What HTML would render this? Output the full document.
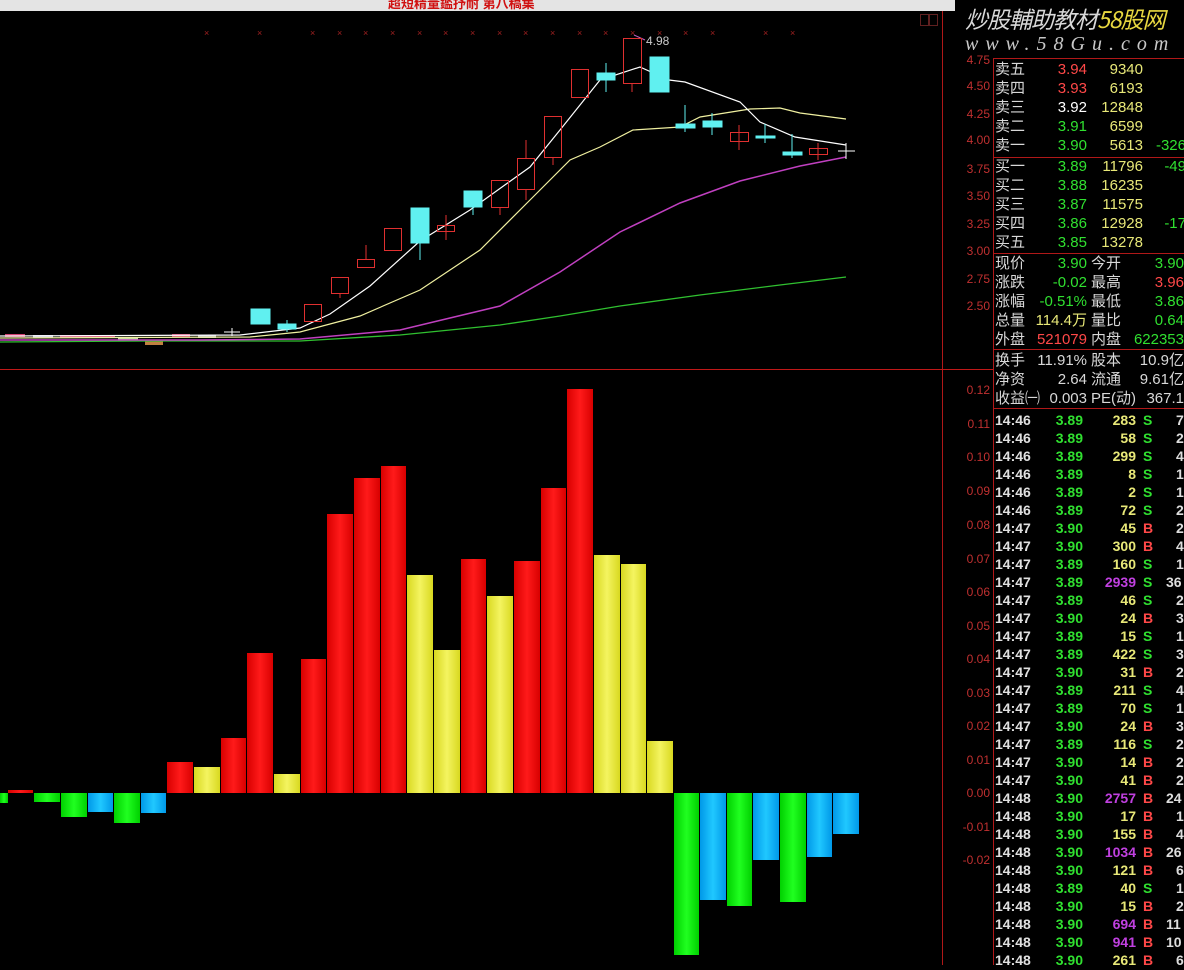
<!DOCTYPE html>
<html><head><meta charset="utf-8">
<style>
*{margin:0;padding:0}
body{width:1184px;height:965px;background:#000;overflow:hidden;position:relative;font-family:"Liberation Sans","Noto Sans CJK SC",sans-serif}
.t{position:absolute;font-size:15px;line-height:19px;white-space:nowrap}
.r{text-align:right}
.ax{position:absolute;font-size:12px;color:#c03030;width:42px;text-align:right;left:948px;line-height:12px}
</style></head><body>
<div style="position:absolute;left:0;top:0;width:955px;height:11px;background:#e4e4e4"></div>
<div style="position:absolute;left:388px;top:-7px;font-size:13px;color:#d01010;font-weight:bold">超短精量鑑抒耐 第八稿集</div>
<svg width="1184" height="965" style="position:absolute;left:0;top:0">
<defs>
<linearGradient id="gr" x1="0" x2="1"><stop offset="0" stop-color="#d80000"/><stop offset=".5" stop-color="#ff1a1a"/><stop offset="1" stop-color="#d80000"/></linearGradient>
<linearGradient id="gy" x1="0" x2="1"><stop offset="0" stop-color="#d8d820"/><stop offset=".5" stop-color="#f4f460"/><stop offset="1" stop-color="#d8d820"/></linearGradient>
<linearGradient id="gg" x1="0" x2="1"><stop offset="0" stop-color="#00d000"/><stop offset=".5" stop-color="#20ff20"/><stop offset="1" stop-color="#00d000"/></linearGradient>
<linearGradient id="gb" x1="0" x2="1"><stop offset="0" stop-color="#0098e8"/><stop offset=".5" stop-color="#20c8ff"/><stop offset="1" stop-color="#0098e8"/></linearGradient>
</defs>
<line x1="942.5" y1="11" x2="942.5" y2="965" stroke="#b01818"/>
<line x1="993.5" y1="58" x2="993.5" y2="965" stroke="#b01818"/>
<line x1="0" y1="369.5" x2="993" y2="369.5" stroke="#c01818"/>
<g stroke="#b01818"><line x1="993" y1="58.5" x2="1184" y2="58.5"/><line x1="993" y1="157.5" x2="1184" y2="157.5"/><line x1="993" y1="253.5" x2="1184" y2="253.5"/><line x1="993" y1="349.5" x2="1184" y2="349.5"/><line x1="993" y1="408.5" x2="1184" y2="408.5"/></g>
<g fill="#a02020" font-size="9" font-family="Liberation Sans">
<text x="204" y="36">×</text><text x="257" y="36">×</text><text x="310" y="36">×</text><text x="337" y="36">×</text><text x="363" y="36">×</text><text x="390" y="36">×</text><text x="417" y="36">×</text><text x="443" y="36">×</text><text x="470" y="36">×</text><text x="497" y="36">×</text><text x="523" y="36">×</text><text x="550" y="36">×</text><text x="577" y="36">×</text><text x="603" y="36">×</text><text x="630" y="36">×</text><text x="657" y="36">×</text><text x="683" y="36">×</text><text x="710" y="36">×</text><text x="763" y="36">×</text><text x="790" y="36">×</text>
</g>
<text x="646" y="45" fill="#ccc" font-size="12" font-family="Liberation Sans">4.98</text>
<line x1="634" y1="35" x2="645" y2="40" stroke="#c060c0"/>
<g>
<rect x="5" y="334" width="20" height="3" fill="#d04070"/><rect x="33" y="335" width="20" height="3" fill="#c0c0d8"/><rect x="60" y="335" width="55" height="3" fill="#d04070"/><rect x="118" y="338" width="20" height="3" fill="#c0e0a0"/><rect x="145" y="341" width="18" height="4" fill="#c08040"/><rect x="172" y="334" width="18" height="3" fill="#d04070"/><rect x="198" y="335" width="18" height="3" fill="#c0c0d8"/>
<line x1="224" y1="332" x2="240" y2="332" stroke="#fff"/><line x1="232" y1="328" x2="232" y2="336" stroke="#fff"/>
</g>
<polyline fill="none" stroke="#30c030" stroke-width="1.3" points="0,342 150,341 300,341 400,335 500,325 560,316 620,306 700,295 780,285 846,277"/>
<polyline fill="none" stroke="#c040c0" stroke-width="1.5" points="0,340 200,340 300,339 400,330 500,306 560,272 620,232 680,203 740,181 800,166 846,157"/>
<polyline fill="none" stroke="#f0f0a0" stroke-width="1.2" points="0,338 250,337 300,332 360,316 420,290 480,250 530,200 570,160 600,147 633,130 680,127 700,117 750,109 780,108 800,113 846,119"/>
<polyline fill="none" stroke="#fff" stroke-width="1.2" points="0,336 240,335 300,328 330,314 370,286 420,241 470,210 530,167 560,130 600,80 640,67 669,80 685,82 740,102 760,122 795,137 846,145"/>
<g stroke="#e03030" fill="none">
<rect x="304.5" y="304.5" width="17" height="17"/><rect x="331.5" y="277.5" width="17" height="16"/><line x1="340" y1="293" x2="340" y2="298"/>
<rect x="357.5" y="259.5" width="17" height="8"/><line x1="366" y1="245" x2="366" y2="259"/>
<rect x="384.5" y="228.5" width="17" height="22"/>
<rect x="437.5" y="225.5" width="17" height="6"/><line x1="446" y1="215" x2="446" y2="240"/>
<rect x="491.5" y="180.5" width="17" height="27"/><line x1="500" y1="207" x2="500" y2="215"/>
<rect x="517.5" y="158.5" width="17" height="31"/><line x1="526" y1="140" x2="526" y2="158"/><line x1="526" y1="189" x2="526" y2="200"/>
<rect x="544.5" y="116.5" width="17" height="41"/><line x1="553" y1="157" x2="553" y2="165"/>
<rect x="571.5" y="69.5" width="17" height="28"/>
<rect x="623.5" y="38.5" width="18" height="45"/><line x1="632" y1="83" x2="632" y2="92"/>
<rect x="730.5" y="132.5" width="18" height="9"/><line x1="739" y1="125" x2="739" y2="150"/>
<rect x="809.5" y="148.5" width="18" height="6"/><line x1="818" y1="143" x2="818" y2="160"/>
</g>
<g fill="#60f0f0" stroke="#60f0f0">
<rect x="251" y="309" width="19" height="15"/>
<rect x="278" y="324" width="18" height="5"/><line x1="287" y1="320" x2="287" y2="332"/>
<rect x="411" y="208" width="18" height="35"/><line x1="420" y1="243" x2="420" y2="260"/>
<rect x="464" y="191" width="18" height="16"/><line x1="473" y1="207" x2="473" y2="215"/>
<rect x="597" y="73" width="18" height="7"/><line x1="606" y1="63" x2="606" y2="92"/>
<rect x="650" y="57" width="19" height="35"/>
<rect x="676" y="124" width="19" height="4"/><line x1="685" y1="105" x2="685" y2="132"/>
<rect x="703" y="121" width="19" height="6"/><line x1="712" y1="113" x2="712" y2="135"/>
<rect x="756" y="136" width="19" height="2"/><line x1="765" y1="124" x2="765" y2="143"/>
<rect x="783" y="152" width="19" height="3"/><line x1="792" y1="134" x2="792" y2="158"/>
</g>
<line x1="838" y1="151" x2="855" y2="151" stroke="#fff"/><line x1="846" y1="143" x2="846" y2="159" stroke="#fff"/>
<g>
<rect x="0" y="793" width="8" height="10" fill="url(#gg)"/>
<rect x="8" y="790" width="25" height="3" fill="url(#gr)"/>
<rect x="34" y="793" width="26" height="9" fill="url(#gg)"/>
<rect x="61" y="793" width="26" height="24" fill="url(#gg)"/>
<rect x="88" y="793" width="25" height="19" fill="url(#gb)"/>
<rect x="114" y="793" width="26" height="30" fill="url(#gg)"/>
<rect x="141" y="793" width="25" height="20" fill="url(#gb)"/>
<rect x="167" y="762" width="26" height="31" fill="url(#gr)"/>
<rect x="194" y="767" width="26" height="26" fill="url(#gy)"/>
<rect x="221" y="738" width="25" height="55" fill="url(#gr)"/>
<rect x="247" y="653" width="26" height="140" fill="url(#gr)"/>
<rect x="274" y="774" width="26" height="19" fill="url(#gy)"/>
<rect x="301" y="659" width="25" height="134" fill="url(#gr)"/>
<rect x="327" y="514" width="26" height="279" fill="url(#gr)"/>
<rect x="354" y="478" width="26" height="315" fill="url(#gr)"/>
<rect x="381" y="466" width="25" height="327" fill="url(#gr)"/>
<rect x="407" y="575" width="26" height="218" fill="url(#gy)"/>
<rect x="434" y="650" width="26" height="143" fill="url(#gy)"/>
<rect x="461" y="559" width="25" height="234" fill="url(#gr)"/>
<rect x="487" y="596" width="26" height="197" fill="url(#gy)"/>
<rect x="514" y="561" width="26" height="232" fill="url(#gr)"/>
<rect x="541" y="488" width="25" height="305" fill="url(#gr)"/>
<rect x="567" y="389" width="26" height="404" fill="url(#gr)"/>
<rect x="594" y="555" width="26" height="238" fill="url(#gy)"/>
<rect x="621" y="564" width="25" height="229" fill="url(#gy)"/>
<rect x="647" y="741" width="26" height="52" fill="url(#gy)"/>
<rect x="674" y="793" width="25" height="162" fill="url(#gg)"/>
<rect x="700" y="793" width="26" height="107" fill="url(#gb)"/>
<rect x="727" y="793" width="25" height="113" fill="url(#gg)"/>
<rect x="753" y="793" width="26" height="67" fill="url(#gb)"/>
<rect x="780" y="793" width="26" height="109" fill="url(#gg)"/>
<rect x="807" y="793" width="25" height="64" fill="url(#gb)"/>
<rect x="833" y="793" width="26" height="41" fill="url(#gb)"/>
</g>
</svg>
<div style="position:absolute;left:920px;top:14px;width:7px;height:10px;border:1px solid #602020"></div>
<div style="position:absolute;left:929px;top:14px;width:7px;height:10px;border:1px solid #602020"></div>
<div class="ax" style="top:54px">4.75</div><div class="ax" style="top:80px">4.50</div><div class="ax" style="top:108px">4.25</div><div class="ax" style="top:134px">4.00</div><div class="ax" style="top:163px">3.75</div><div class="ax" style="top:190px">3.50</div><div class="ax" style="top:218px">3.25</div><div class="ax" style="top:245px">3.00</div><div class="ax" style="top:273px">2.75</div><div class="ax" style="top:300px">2.50</div>
<div class="ax" style="top:384px">0.12</div><div class="ax" style="top:418px">0.11</div><div class="ax" style="top:451px">0.10</div><div class="ax" style="top:485px">0.09</div><div class="ax" style="top:519px">0.08</div><div class="ax" style="top:553px">0.07</div><div class="ax" style="top:586px">0.06</div><div class="ax" style="top:620px">0.05</div><div class="ax" style="top:653px">0.04</div><div class="ax" style="top:687px">0.03</div><div class="ax" style="top:720px">0.02</div><div class="ax" style="top:754px">0.01</div><div class="ax" style="top:787px">0.00</div><div class="ax" style="top:821px">-0.01</div><div class="ax" style="top:854px">-0.02</div>
<div style="position:absolute;left:965px;top:4px;font-size:23px;font-style:italic;color:#d8d8d8;font-family:'Noto Sans CJK SC',sans-serif;line-height:28px;letter-spacing:-1px">炒股輔助教材<span style="color:#e8d840">58股网</span></div>
<div style="position:absolute;left:965px;top:33px;font-size:20px;font-style:italic;color:#c8c8c8;letter-spacing:7px;line-height:22px;font-family:'Liberation Serif',serif">www.58Gu.com</div>
<div id="p"></div>
<script>
var h='';
function T(x,y,s,c,right){h+='<div class="t'+(right?' r':'')+'" style="'+(right?'right:'+(1184-x)+'px':'left:'+x+'px')+';top:'+y+'px;color:'+c+'">'+s+'</div>';}
var W='#d8d8d8',G='#30e030',R='#ff4848',Y='#e8e878',P='#c040e0';
var ob=[['卖五','3.94',R,'9340',''],['卖四','3.93',R,'6193',''],['卖三','3.92','#fff','12848',''],['卖二','3.91',G,'6599',''],['卖一','3.90',G,'5613','-326'],
['买一','3.89',G,'11796','-49'],['买二','3.88',G,'16235',''],['买三','3.87',G,'11575',''],['买四','3.86',G,'12928','-17'],['买五','3.85',G,'13278','']];
var ys=[60,79,98,117,136,157,176,195,214,233];
ob.forEach(function(r,i){T(995,ys[i],r[0],W);T(1087,ys[i],r[1],r[2],1);T(1143,ys[i],r[3],Y,1);if(r[4])T(1186,ys[i],r[4],G,1);});
var st=[['现价','3.90',G,'今开','3.90',G],['涨跌','-0.02',G,'最高','3.96',R],['涨幅','-0.51%',G,'最低','3.86',G],['总量','114.4万',Y,'量比','0.64',G],['外盘','521079',R,'内盘','622353',G]];
st.forEach(function(r,i){var y=254+i*19;T(995,y,r[0],W);T(1087,y,r[1],r[2],1);T(1091,y,r[3],W);T(1184,y,r[4],r[5],1);});
var s2=[['换手','11.91%','股本','10.9亿'],['净资','2.64','流通','9.61亿'],['收益㈠','0.003','PE(动)','367.1']];
s2.forEach(function(r,i){var y=351+i*19;T(995,y,r[0],W);T(1087,y,r[1],W,1);T(1091,y,r[2],W);T(1184,y,r[3],W,1);});
var tk=[['14:46','3.89','283','S','7'],['14:46','3.89','58','S','2'],['14:46','3.89','299','S','4'],['14:46','3.89','8','S','1'],['14:46','3.89','2','S','1'],['14:46','3.89','72','S','2'],['14:47','3.90','45','B','2'],['14:47','3.90','300','B','4'],['14:47','3.89','160','S','1'],['14:47','3.89','2939','S','36'],['14:47','3.89','46','S','2'],['14:47','3.90','24','B','3'],['14:47','3.89','15','S','1'],['14:47','3.89','422','S','3'],['14:47','3.90','31','B','2'],['14:47','3.89','211','S','4'],['14:47','3.89','70','S','1'],['14:47','3.90','24','B','3'],['14:47','3.89','116','S','2'],['14:47','3.90','14','B','2'],['14:47','3.90','41','B','2'],['14:48','3.90','2757','B','24'],['14:48','3.90','17','B','1'],['14:48','3.90','155','B','4'],['14:48','3.90','1034','B','26'],['14:48','3.90','121','B','6'],['14:48','3.89','40','S','1'],['14:48','3.90','15','B','2'],['14:48','3.90','694','B','11'],['14:48','3.90','941','B','10'],['14:48','3.90','261','B','6']];
tk.forEach(function(r,i){var y=411+i*18;var s='font-size:14px;font-weight:bold;';
h+='<div class="t" style="'+s+'left:995px;top:'+y+'px;color:#e0e0e0">'+r[0]+'</div>';
h+='<div class="t r" style="'+s+'right:'+(1184-1083)+'px;top:'+y+'px;color:'+G+'">'+r[1]+'</div>';
h+='<div class="t r" style="'+s+'right:'+(1184-1136)+'px;top:'+y+'px;color:'+(+r[2]>500?P:Y)+'">'+r[2]+'</div>';
h+='<div class="t" style="'+s+'left:1143px;top:'+y+'px;color:'+(r[3]=='S'?G:R)+'">'+r[3]+'</div>';
h+='<div class="t" style="'+s+'left:'+(r[4].length>1?1166:1176)+'px;top:'+y+'px;color:#ddd">'+r[4]+'</div>';});
document.getElementById('p').innerHTML=h;
</script>
</body></html>
